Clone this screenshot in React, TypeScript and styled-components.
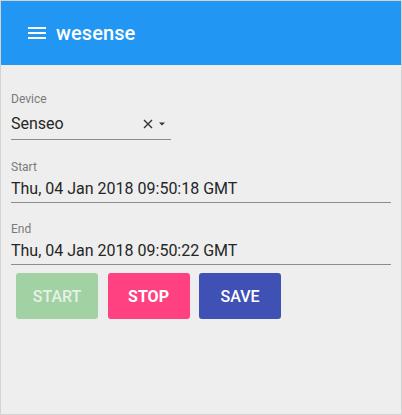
import React from "react";
import styled, { createGlobalStyle } from "styled-components";

const GlobalStyle = createGlobalStyle`
  html, body {
    margin: 0;
    padding: 0;
    background: #eeeeee;
  }
  * {
    box-sizing: border-box;
  }
`;

const Frame = styled.div`
  width: 402px;
  height: 415px;
  border: 1px solid #d3d3d3;
  background: #eeeeee;
  font-family: Roboto, "Liberation Sans", sans-serif;
  overflow: hidden;
`;

const AppBar = styled.header`
  height: 64px;
  background: #2196f3;
  display: flex;
  align-items: center;
  padding: 0 24px;
  gap: 7px;
  color: #ffffff;
`;

const MenuButton = styled.span`
  display: flex;
  width: 24px;
  height: 24px;
`;

const Title = styled.h1`
  margin: 0;
  font-size: 20px;
  font-weight: 500;
  letter-spacing: 0.1px;
  line-height: 24px;
`;

const Content = styled.main`
  padding: 27px 10px 0 10px;
  display: flex;
  flex-direction: column;
`;

const Field = styled.div<{ $gap: number; $width?: number }>`
  margin-top: ${(p) => p.$gap}px;
  width: ${(p) => (p.$width ? `${p.$width}px` : "100%")};
  display: flex;
  flex-direction: column;
`;

const Label = styled.label`
  font-size: 12px;
  line-height: 14px;
  color: #7a7a7a;
`;

const Input = styled.div<{ $select?: boolean }>`
  margin-top: ${(p) => (p.$select ? 8 : 5)}px;
  padding-bottom: ${(p) => (p.$select ? 6 : 4)}px;
  border-bottom: 1px solid #8c8c8c;
  font-size: 16px;
  line-height: 19px;
  color: #262626;
  display: flex;
  align-items: center;
`;

const Value = styled.span`
  flex: 1;
`;

const SelectIcons = styled.span`
  display: flex;
  align-items: center;
  gap: 6px;
  margin-right: 6px;
`;

const ButtonRow = styled.div`
  margin-top: 8px;
  padding-left: 5px;
  display: flex;
  gap: 9.5px;
`;

const Button = styled.button<{ $bg: string; $fg: string; $weight: number }>`
  width: 82px;
  height: 46px;
  border: none;
  border-radius: 3px;
  background: ${(p) => p.$bg};
  color: ${(p) => p.$fg};
  font-family: Roboto, "Liberation Sans", sans-serif;
  font-size: 16px;
  font-weight: ${(p) => p.$weight};
  text-transform: uppercase;
  padding: 0;
`;

const MenuIcon = () => (
  <svg width="24" height="24" viewBox="0 0 24 24" fill="#ffffff">
    <path d="M3 18h18v-2H3v2zm0-5h18v-2H3v2zm0-7v2h18V6H3z" />
  </svg>
);

const ClearIcon = () => (
  <svg width="10" height="10" viewBox="0 0 10 10">
    <path d="M1 1L9 9M9 1L1 9" stroke="#333" strokeWidth="1.4" />
  </svg>
);

const ArrowIcon = () => (
  <svg width="6" height="4" viewBox="0 0 6 4">
    <path d="M0 0.5h6L3 3.5z" fill="#333" />
  </svg>
);

export default function App() {
  return (
    <Frame>
      <GlobalStyle />
      <AppBar>
        <MenuButton>
          <MenuIcon />
        </MenuButton>
        <Title>wesense</Title>
      </AppBar>
      <Content>
        <Field $gap={0} $width={160}>
          <Label>Device</Label>
          <Input $select>
            <Value>Senseo</Value>
            <SelectIcons>
              <ClearIcon />
              <ArrowIcon />
            </SelectIcons>
          </Input>
        </Field>
        <Field $gap={20}>
          <Label>Start</Label>
          <Input>
            <Value>Thu, 04 Jan 2018 09:50:18 GMT</Value>
          </Input>
        </Field>
        <Field $gap={19}>
          <Label>End</Label>
          <Input>
            <Value>Thu, 04 Jan 2018 09:50:22 GMT</Value>
          </Input>
        </Field>
        <ButtonRow>
          <Button $bg="#a2d1a3" $fg="#e6f1e6" $weight={500} disabled>
            Start
          </Button>
          <Button $bg="#ff4081" $fg="#ffffff" $weight={700}>
            Stop
          </Button>
          <Button $bg="#3f51b5" $fg="#ffffff" $weight={500}>
            Save
          </Button>
        </ButtonRow>
      </Content>
    </Frame>
  );
}
